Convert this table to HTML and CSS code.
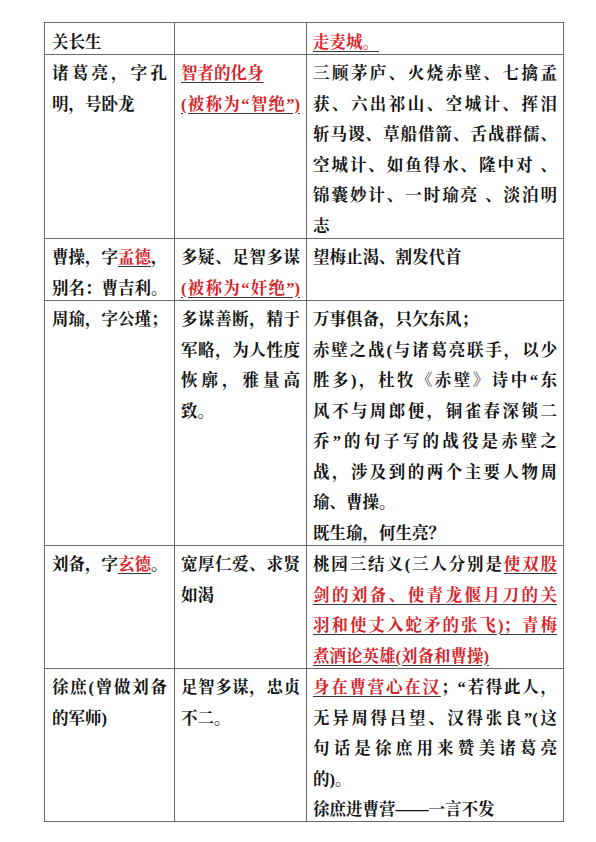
FILE: index.html
```html
<!DOCTYPE html>
<html lang="zh-CN">
<head>
<meta charset="utf-8">
<title>三国人物</title>
<link rel="stylesheet" href="styles.css">
</head>
<body>
<div class="page">
<table class="sheet">
<colgroup><col class="c1"><col class="c2"><col class="c3"></colgroup>
<tr>
<td><div class="c"><div class="l">关长生</div></div></td>
<td><div class="c"></div></td>
<td><div class="c"><div class="l"><span class="r">走麦城。</span></div></div></td>
</tr>
<tr>
<td><div class="c">
<div class="l j">诸葛亮，字孔</div>
<div class="l">明，号卧龙</div>
</div></td>
<td><div class="c">
<div class="l"><span class="r">智者的化身</span></div>
<div class="l j"><span class="r">(被称为“智绝”)</span></div>
</div></td>
<td><div class="c">
<div class="l j">三顾茅庐、火烧赤壁、七擒孟</div>
<div class="l j">获、六出祁山、空城计、挥泪</div>
<div class="l j">斩马谡、草船借箭、舌战群儒、</div>
<div class="l j">空城计、如鱼得水、隆中对 、</div>
<div class="l j">锦囊妙计、一时瑜亮 、淡泊明</div>
<div class="l">志</div>
</div></td>
</tr>
<tr>
<td><div class="c">
<div class="l j">曹操，字<span class="r">孟德</span>，</div>
<div class="l j">别名：曹吉利。</div>
</div></td>
<td><div class="c">
<div class="l j">多疑、足智多谋</div>
<div class="l j"><span class="r">(被称为“奸绝”)</span></div>
</div></td>
<td><div class="c">
<div class="l">望梅止渴、割发代首</div>
</div></td>
</tr>
<tr>
<td><div class="c">
<div class="l j">周瑜，字公瑾；</div>
</div></td>
<td><div class="c">
<div class="l j">多谋善断，精于</div>
<div class="l j">军略，为人性度</div>
<div class="l j">恢廓，雅量高</div>
<div class="l">致。</div>
</div></td>
<td><div class="c">
<div class="l">万事俱备，只欠东风；</div>
<div class="l j">赤壁之战(与诸葛亮联手，以少</div>
<div class="l j">胜多)，杜牧《赤壁》诗中“东</div>
<div class="l j">风不与周郎便，铜雀春深锁二</div>
<div class="l j">乔”的句子写的战役是赤壁之</div>
<div class="l j">战，涉及到的两个主要人物周</div>
<div class="l">瑜、曹操。</div>
<div class="l">既生瑜，何生亮？</div>
</div></td>
</tr>
<tr>
<td><div class="c">
<div class="l j">刘备，字<span class="r">玄德</span>。</div>
</div></td>
<td><div class="c">
<div class="l j">宽厚仁爱、求贤</div>
<div class="l">如渴</div>
</div></td>
<td><div class="c">
<div class="l j">桃园三结义(三人分别是<span class="r">使双股</span></div>
<div class="l j"><span class="r">剑的刘备、使青龙偃月刀的关</span></div>
<div class="l j"><span class="r">羽和使丈入蛇矛的张飞)；青梅</span></div>
<div class="l"><span class="r">煮酒论英雄(刘备和曹操)</span></div>
</div></td>
</tr>
<tr>
<td><div class="c">
<div class="l j">徐庶(曾做刘备</div>
<div class="l">的军师)</div>
</div></td>
<td><div class="c">
<div class="l j">足智多谋，忠贞</div>
<div class="l">不二。</div>
</div></td>
<td><div class="c">
<div class="l j"><span class="r">身在曹营心在汉</span>；“若得此人，</div>
<div class="l j">无异周得吕望、汉得张良”(这</div>
<div class="l j">句话是徐庶用来赞美诸葛亮</div>
<div class="l">的)。</div>
<div class="l">徐庶进曹营——一言不发</div>
</div></td>
</tr>
</table>
</div>
</body>
</html>
```

FILE: styles.css
```css
html, body {
  margin: 0;
  padding: 0;
  background: #ffffff;
}
.page {
  padding: 22px 0 0 44px;
}
.sheet {
  border-collapse: collapse;
  table-layout: fixed;
  width: 519px;
  font-family: "Liberation Serif", "Noto Serif CJK SC", "Noto Sans CJK SC", serif;
  font-size: 16.5px;
  font-weight: 700;
  color: #141414;
}
.c1 { width: 130px; }
.c2 { width: 132px; }
.c3 { width: 257px; }
.sheet td {
  border: 1px solid #6a6a6a;
  padding: 0;
  vertical-align: top;
}
.c {
  display: flex;
  flex-direction: column;
  gap: 10.5px;
  padding: 9.5px 7px 1px 7px;
}
.sheet td:nth-child(2) .c,
.sheet td:nth-child(3) .c {
  padding-left: 6px;
  padding-right: 6px;
}
.l {
  line-height: 20px;
  height: 20px;
  white-space: nowrap;
}
.j {
  text-align: justify;
  text-align-last: justify;
}
.r {
  color: #d8232a;
  text-decoration: underline;
  text-decoration-color: #3a3a3a;
  text-underline-offset: 3px;
}
```
